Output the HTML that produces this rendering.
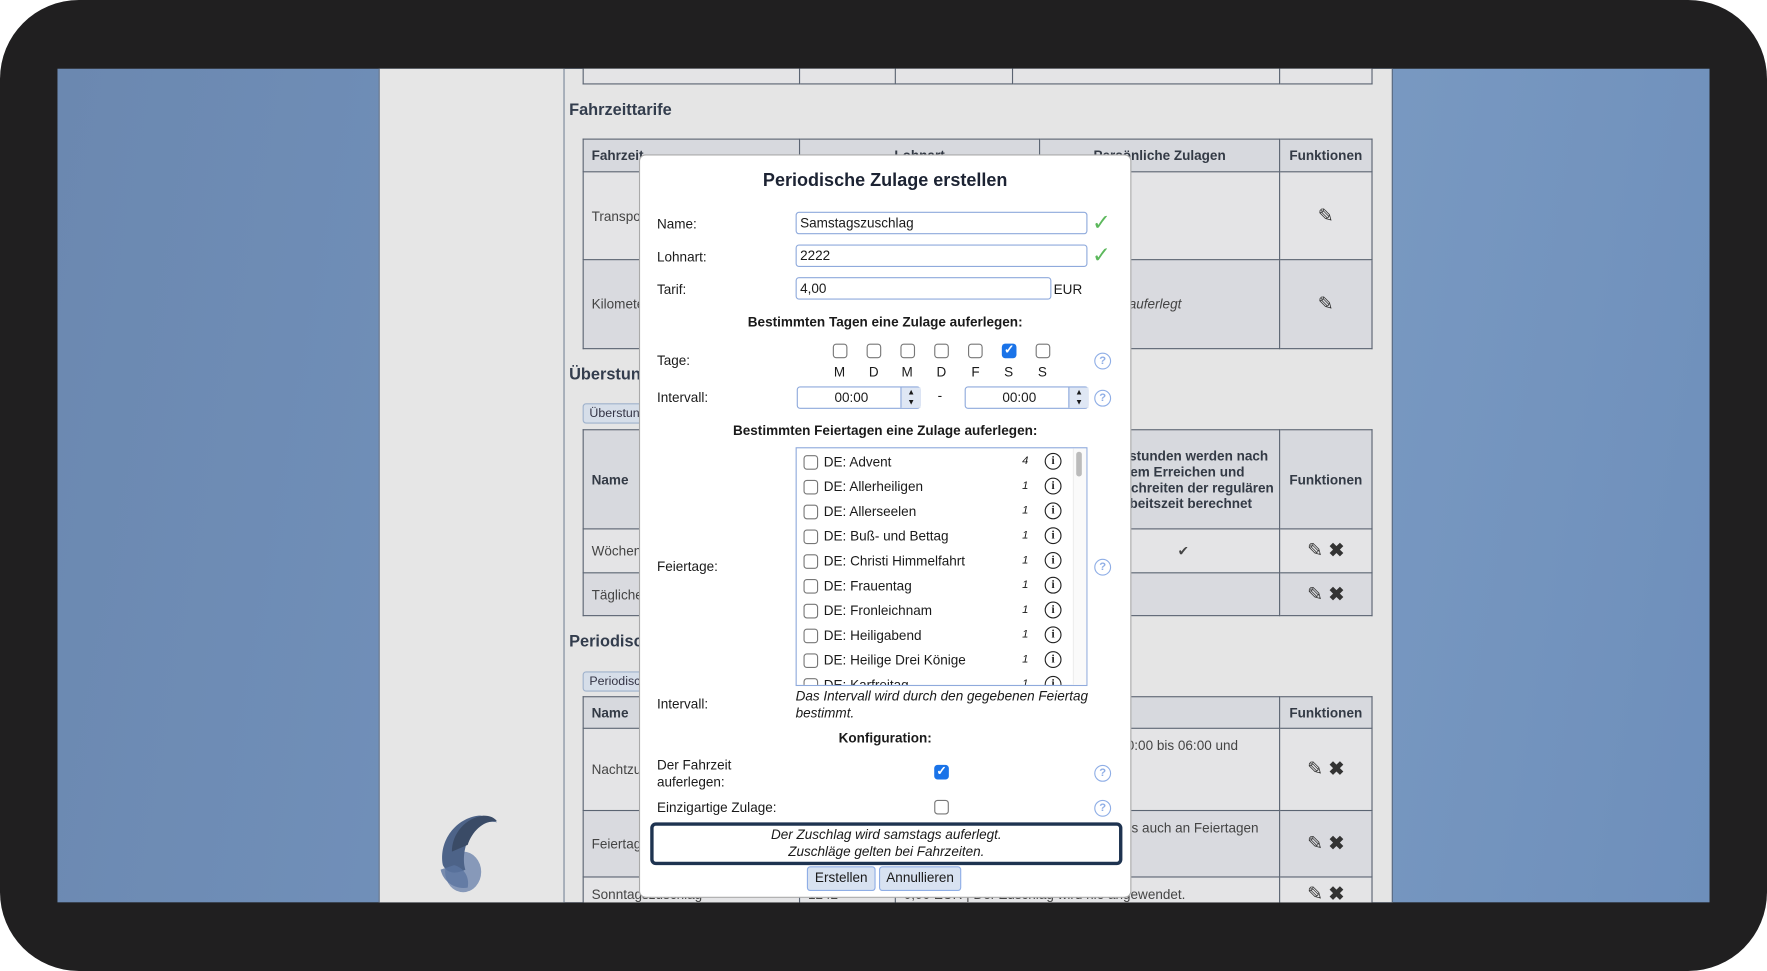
<!DOCTYPE html>
<html><head><meta charset="utf-8">
<style>
html,body{margin:0;padding:0;width:1767px;height:971px;overflow:hidden;background:#fff;}
#wrap{position:absolute;left:0;top:0;width:1568px;height:862px;transform:scale(1.12691,1.1265);transform-origin:0 0;font-family:"Liberation Sans",Arial,sans-serif;color:#222;}
.a{position:absolute;}
#frame{left:0;top:0;width:1568px;height:862px;background:#201f20;border-radius:70px;}
#screen{left:51px;top:61px;width:1466px;height:740px;overflow:hidden;background:linear-gradient(100deg,#6b88b0 0%,#7393bd 40%,#7a9ac2 70%,#6e8fbb 100%);}
#page{left:285px;top:0;width:898px;height:740px;background:#e5e5e5;border-left:1px solid #4b5e7a;border-right:1px solid #4b5e7a;}
#side{left:0;top:0;width:163px;height:740px;border-right:1px solid #7a879a;background:#e6e6e6;}
table{border-collapse:collapse;position:absolute;font-size:12px;color:#444;table-layout:fixed;}
td,th{border:1px solid #5b6472;padding:0 7px;background:#e4e4e6;overflow:hidden;}
th{background:#d7d9de;font-weight:bold;color:#333a45;}
tr.alt td{background:#d9dadf;}
.h{font-weight:bold;font-size:14.5px;color:#333d4d;}
.tbtn{font-size:11px;color:#334;background:#d6dee9;border:1px solid #9fb2cc;border-radius:3px;padding:2px 5px;}
#modal{left:516px;top:76px;width:435px;height:658px;background:#fff;border-radius:6px;border:1px solid #aaa;font-size:12px;color:#1a1a1a;}
.lbl{position:absolute;left:15px;}
.inp{position:absolute;border:1px solid #8faadc;border-radius:3px;height:20px;background:#fff;box-sizing:border-box;font-size:12px;line-height:18px;padding-left:3px;}
.ok{position:absolute;color:#5cb85c;font-size:20px;line-height:20px;}
.q{position:absolute;width:13px;height:13px;border:1px solid #8faee6;border-radius:50%;color:#8faee6;font-size:10px;line-height:13px;text-align:center;font-weight:bold;}
.cb{position:absolute;width:11px;height:11px;border:1px solid #777;border-radius:3px;background:#fff;}
.cbk{position:absolute;width:13px;height:13px;border-radius:3px;background:#1a73e8;color:#fff;font-size:11px;line-height:13px;text-align:center;font-weight:bold;}
.b{font-weight:bold;}
.ctr{position:absolute;left:0;width:435px;text-align:center;}
.li{position:absolute;left:6px;height:22px;width:230px;font-size:12px;}
.li .cb{left:0;top:5px;}
.li .t{position:absolute;left:18px;top:4px;}
.li .n{position:absolute;left:194px;top:5px;font-style:italic;font-size:10px;}
.li .i{position:absolute;left:214px;top:3px;width:13px;height:13px;border:1.3px solid #222;border-radius:50%;font-size:10px;line-height:13px;text-align:center;font-family:"Liberation Serif",serif;font-weight:bold;}
.btn{position:absolute;top:631px;height:20px;border:1px solid #8faee6;border-radius:3px;background:#d8e2f1;font-size:12px;line-height:19px;text-align:center;}
.fn{font-size:17px;color:#333;}
</style></head><body>
<div id="wrap">
<div class="a" id="frame"></div>
<div class="a" id="screen">
  <div class="a" id="page">
    <div class="a" id="side">
      <svg class="a" style="left:40px;top:655px" width="80" height="80" viewBox="0 0 80 80">
        <ellipse cx="34" cy="58" rx="16" ry="18" fill="#6f86ae" opacity=".8"/>
        <path d="M16 52 C12 30 28 10 48 8 C56 8 62 12 64 14 C56 12 44 16 38 30 C34 40 34 50 36 56 C28 60 20 60 16 52Z" fill="#4d6388"/>
        <path d="M24 40 C24 24 36 10 52 8 C58 8 62 10 64 13 C52 12 42 22 38 34 Z" fill="#3a4b66"/>
        <path d="M14 56 C16 66 26 74 38 72 C40 62 34 54 26 52Z" fill="#5b74a0" opacity=".8"/>
      </svg>
    </div>
    <table style="left:180px;top:-20px;width:700px;height:34px;"><colgroup><col style="width:192px"><col style="width:85px"><col style="width:104px"><col style="width:237px"><col style="width:82px"></colgroup><tr><td></td><td></td><td></td><td></td><td></td></tr></table>
    <div class="a h" style="left:168px;top:29px;">Fahrzeittarife</div>
    <table style="left:180px;top:62px;width:700px;">
      <colgroup><col style="width:192px"><col style="width:213px"><col style="width:213px"><col style="width:82px"></colgroup>
      <tr style="height:29px"><th style="text-align:left">Fahrzeit</th><th>Lohnart</th><th>Persönliche Zulagen</th><th>Funktionen</th></tr>
      <tr style="height:78px"><td>Transport</td><td></td><td>Zulagen: 3</td><td style="text-align:center" class="fn">✎</td></tr>
      <tr class="alt" style="height:79px"><td>Kilometer</td><td></td><td><i>Vergütungen auferlegt</i></td><td style="text-align:center" class="fn">✎</td></tr>
    </table>
    <div class="a h" style="left:168px;top:264px;">Überstunden</div>
    <div class="a tbtn" style="left:180px;top:297px;">Überstunden</div>
    <table style="left:180px;top:320px;width:700px;">
      <colgroup><col style="width:447px"><col style="width:171px"><col style="width:82px"></colgroup>
      <tr style="height:88px"><th style="text-align:left">Name</th><th style="font-size:12px;padding:0 3px">Überstunden werden nach dem Erreichen und Überschreiten der regulären Arbeitszeit berechnet</th><th style="padding:0 2px">Funktionen</th></tr>
      <tr style="height:39px"><td>Wöchentliche</td><td style="text-align:center">✔</td><td style="text-align:center" class="fn">✎ <b>✖</b></td></tr>
      <tr class="alt" style="height:38px"><td>Tägliche</td><td></td><td style="text-align:center" class="fn">✎ <b>✖</b></td></tr>
    </table>
    <div class="a h" style="left:168px;top:501px;">Periodische</div>
    <div class="a tbtn" style="left:180px;top:535px;">Periodische</div>
    <table style="left:180px;top:557px;width:700px;">
      <colgroup><col style="width:192px"><col style="width:85px"><col style="width:341px"><col style="width:82px"></colgroup>
      <tr style="height:28px"><th style="text-align:left">Name</th><th></th><th></th><th style="padding:0 2px">Funktionen</th></tr>
      <tr style="height:73px"><td>Nachtzuschlag</td><td></td><td>Der Zuschlag wird für alle Tage von 00:00 bis 06:00 und 22:00 bis 24:00 Uhr<br><br>Zuschläge gelten bei Fahrzeiten.</td><td style="text-align:center" class="fn">✎ <b>✖</b></td></tr>
      <tr class="alt" style="height:59px"><td>Feiertag</td><td></td><td>Der Zuschlag wird sowohl sonntags als auch an Feiertagen auferlegt.<br>Zuschläge gelten bei Fahrzeiten.</td><td style="text-align:center" class="fn">✎ <b>✖</b></td></tr>
      <tr style="height:30px"><td>Sonntagszuschlag</td><td>1242</td><td>0,00 EUR | Der Zuschlag wird nie angewendet.</td><td style="text-align:center" class="fn">✎ <b>✖</b></td></tr>
    </table>
  </div>

  <div class="a" id="modal">
    <div class="ctr b" style="top:14px;font-size:16px;color:#1c2333;">Periodische Zulage erstellen</div>
    <div class="lbl" style="top:54px">Name:</div>
    <div class="inp" style="left:138px;top:50px;width:259px;">Samstagszuschlag</div>
    <div class="ok" style="left:401px;top:50px">✓</div>
    <div class="lbl" style="top:83px">Lohnart:</div>
    <div class="inp" style="left:138px;top:79px;width:259px;">2222</div>
    <div class="ok" style="left:401px;top:79px">✓</div>
    <div class="lbl" style="top:112px">Tarif:</div>
    <div class="inp" style="left:138px;top:108px;width:227px;">4,00</div>
    <div class="a" style="left:367px;top:112px">EUR</div>
    <div class="ctr b" style="top:141px">Bestimmten Tagen eine Zulage auferlegen:</div>
    <div class="lbl" style="top:175px">Tage:</div>
    <div class="cb" style="left:171px;top:167px"></div><div class="a" style="left:172px;top:185px">M</div>
    <div class="cb" style="left:201px;top:167px"></div><div class="a" style="left:203px;top:185px">D</div>
    <div class="cb" style="left:231px;top:167px"></div><div class="a" style="left:232px;top:185px">M</div>
    <div class="cb" style="left:261px;top:167px"></div><div class="a" style="left:263px;top:185px">D</div>
    <div class="cb" style="left:291px;top:167px"></div><div class="a" style="left:294px;top:185px">F</div>
    <div class="cbk" style="left:321px;top:167px">✓</div><div class="a" style="left:323px;top:185px">S</div>
    <div class="cb" style="left:351px;top:167px"></div><div class="a" style="left:353px;top:185px">S</div>
    <div class="q" style="left:403px;top:175px">?</div>
    <div class="lbl" style="top:208px">Intervall:</div>
    <div class="inp" style="left:139px;top:205px;width:110px;text-align:center;padding-right:16px">00:00</div>
    <div class="a" style="left:231px;top:206px;width:17px;height:18px;background:#dfe7f4;border-left:1px solid #8faadc;font-size:7px;line-height:9px;text-align:center">▲<br>▼</div>
    <div class="a" style="left:264px;top:206px">-</div>
    <div class="inp" style="left:288px;top:205px;width:110px;text-align:center;padding-right:16px">00:00</div>
    <div class="a" style="left:380px;top:206px;width:17px;height:18px;background:#dfe7f4;border-left:1px solid #8faadc;font-size:7px;line-height:9px;text-align:center">▲<br>▼</div>
    <div class="q" style="left:403px;top:208px">?</div>
    <div class="ctr b" style="top:237px">Bestimmten Feiertagen eine Zulage auferlegen:</div>
    <div class="lbl" style="top:358px">Feiertage:</div>
    <div class="a" style="left:138px;top:259px;width:257px;height:210px;border:1px solid #8faadc;overflow:hidden;background:#fff;">
      <div class="a" style="left:245px;top:0;width:12px;height:210px;background:#fafafa;border-left:1px solid #eee"></div>
      <div class="a" style="left:248px;top:3px;width:5px;height:22px;background:#bbb;border-radius:3px"></div>
      <div class="li" style="top:1px"><div class="cb"></div><span class="t">DE: Advent</span><span class="n">4</span><span class="i">i</span></div>
      <div class="li" style="top:23px"><div class="cb"></div><span class="t">DE: Allerheiligen</span><span class="n">1</span><span class="i">i</span></div>
      <div class="li" style="top:45px"><div class="cb"></div><span class="t">DE: Allerseelen</span><span class="n">1</span><span class="i">i</span></div>
      <div class="li" style="top:67px"><div class="cb"></div><span class="t">DE: Buß- und Bettag</span><span class="n">1</span><span class="i">i</span></div>
      <div class="li" style="top:89px"><div class="cb"></div><span class="t">DE: Christi Himmelfahrt</span><span class="n">1</span><span class="i">i</span></div>
      <div class="li" style="top:111px"><div class="cb"></div><span class="t">DE: Frauentag</span><span class="n">1</span><span class="i">i</span></div>
      <div class="li" style="top:133px"><div class="cb"></div><span class="t">DE: Fronleichnam</span><span class="n">1</span><span class="i">i</span></div>
      <div class="li" style="top:155px"><div class="cb"></div><span class="t">DE: Heiligabend</span><span class="n">1</span><span class="i">i</span></div>
      <div class="li" style="top:177px"><div class="cb"></div><span class="t">DE: Heilige Drei Könige</span><span class="n">1</span><span class="i">i</span></div>
      <div class="li" style="top:199px"><div class="cb"></div><span class="t">DE: Karfreitag</span><span class="n">1</span><span class="i">i</span></div>
    </div>
    <div class="q" style="left:403px;top:358px">?</div>
    <div class="lbl" style="top:480px">Intervall:</div>
    <div class="a" style="left:138px;top:473px;width:270px;font-style:italic;line-height:15px">Das Intervall wird durch den gegebenen Feiertag bestimmt.</div>
    <div class="ctr b" style="top:510px">Konfiguration:</div>
    <div class="lbl" style="top:534px;line-height:15px">Der Fahrzeit<br>auferlegen:</div>
    <div class="cbk" style="left:261px;top:541px">✓</div>
    <div class="q" style="left:403px;top:541px">?</div>
    <div class="lbl" style="top:572px">Einzigartige Zulage:</div>
    <div class="cb" style="left:261px;top:572px"></div>
    <div class="q" style="left:403px;top:572px">?</div>
    <div class="a" style="left:9px;top:592px;width:413px;height:31px;border:3px solid #1e3350;border-radius:5px;text-align:center;font-style:italic;line-height:15px;padding-top:1px">Der Zuschlag wird samstags auferlegt.<br>Zuschläge gelten bei Fahrzeiten.</div>
    <div class="btn" style="left:148px;width:59px">Erstellen</div>
    <div class="btn" style="left:212px;width:71px">Annullieren</div>
  </div>
</div>
</div>
</body></html>
